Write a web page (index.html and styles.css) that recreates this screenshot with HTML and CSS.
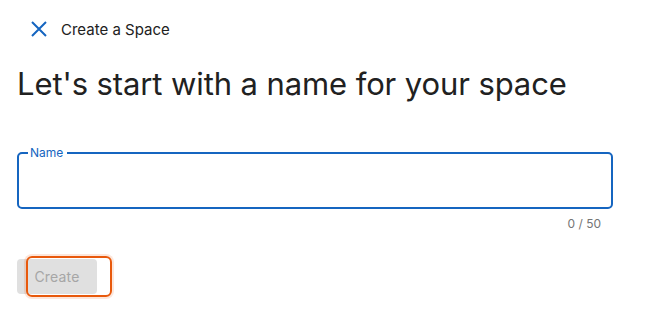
FILE: index.html
```html
<html>
	<head>
		<title>Create a Space</title>
		<link rel="stylesheet" href="styles.css">
	</head>
	<body>
		<div id="page">
			<div class="topbar">
				<svg class="close" width="16" height="16" viewBox="0 0 16 16">
					<path d="M1 1L15 15M15 1L1 15" stroke="#1565c0" stroke-width="2" fill="none"/>
				</svg>
				<span class="topTitle">Create a Space</span>
			</div>

			<h1 class="heading">Let's start with a name for your space</h1>

			<fieldset class="field">
				<legend class="label">Name</legend>
				<input class="nameInput" type="text" maxlength="50">
			</fieldset>
			<div class="counter">0 / 50</div>

			<div class="actions">
				<button class="create" disabled>Create</button>
			</div>
		</div>
	</body>
</html>
```
FILE: styles.css
```css
body {
	margin: 0px;
	padding: 0px;
	background: #fff;
	color: #212121;
	font-family: Inter, Roboto, 'Liberation Sans', sans-serif;
}

#page {
	padding-left: 17px;
	width: 596px;
}

.topbar {
	display: flex;
	align-items: center;
	height: 58px;
	padding-left: 14px;
}

.topbar .close {
	margin-right: 14px;
}

.topTitle {
	font-size: 15px;
	color: #212121;
}

.heading {
	margin: 0px;
	font-size: 31px;
	font-weight: 400;
	line-height: 52px;
	letter-spacing: -0.1px;
}

.field {
	margin: 39px 0 0 0;
	padding: 0 9px;
	height: 60px;
	box-sizing: border-box;
	border: 2px solid #1565c0;
	border-radius: 5px;
}

.field .label {
	padding: 0 4px 0 2px;
	font-size: 12px;
	color: #1565c0;
	line-height: 8px;
}

.nameInput {
	width: 100%;
	border: none;
	outline: none;
	font-size: 16px;
	background: transparent;
}

.counter {
	text-align: right;
	padding-right: 12px;
	margin-top: 7px;
	font-size: 12px;
	color: #757575;
}

.actions {
	margin-top: 28px;
}

.create {
	position: relative;
	width: 80px;
	height: 35px;
	border: none;
	border-radius: 4px;
	background: #e0e0e0;
	color: #a6a6a6;
	font-family: Inter, Roboto, 'Liberation Sans', sans-serif;
	font-size: 14px;
	letter-spacing: 0.2px;
	padding: 0;
}

.create::after {
	content: '';
	position: absolute;
	left: 9px;
	top: -3px;
	width: 82px;
	height: 37px;
	border: 2px solid #e8590c;
	border-radius: 6px;
	box-shadow: 0 0 0 2px rgba(232, 89, 12, 0.15);
}
```
